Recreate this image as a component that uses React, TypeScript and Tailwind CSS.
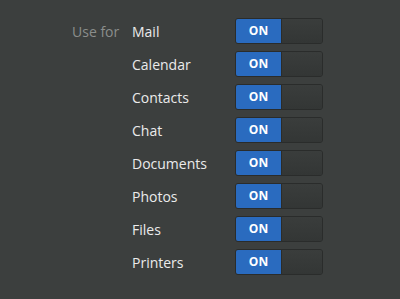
import React from "react";

const items = ["Mail", "Calendar", "Contacts", "Chat", "Documents", "Photos", "Files", "Printers"];

function Switch() {
  return (
    <div className="flex h-[26px] w-[88px] overflow-hidden rounded-[3px] border border-[#2a2c2b] bg-[#363938]">
      <div className="flex w-[45px] items-center justify-center bg-[#2a6bbf] text-[12px] font-bold text-white">
        ON
      </div>
      <div className="flex-1 border-l border-[#2a2c2b] bg-gradient-to-b from-[#3a3d3c] to-[#333635]" />
    </div>
  );
}

export default function App() {
  return (
    <div
      className="flex h-[299px] w-[400px] bg-[#3c3f3e] pl-[72px] pt-[18px]"
      style={{ fontFamily: '"Open Sans", "Noto Sans", sans-serif' }}
    >
      <div className="flex h-[26px] w-[60px] items-center text-[14px] text-[#8b8e8c]">Use for</div>
      <div className="flex flex-col gap-[7px]">
        {items.map((it) => (
          <div key={it} className="flex h-[26px] items-center">
            <div className="w-[103px] text-[14px] text-[#ebebeb]">{it}</div>
            <Switch />
          </div>
        ))}
      </div>
    </div>
  );
}
